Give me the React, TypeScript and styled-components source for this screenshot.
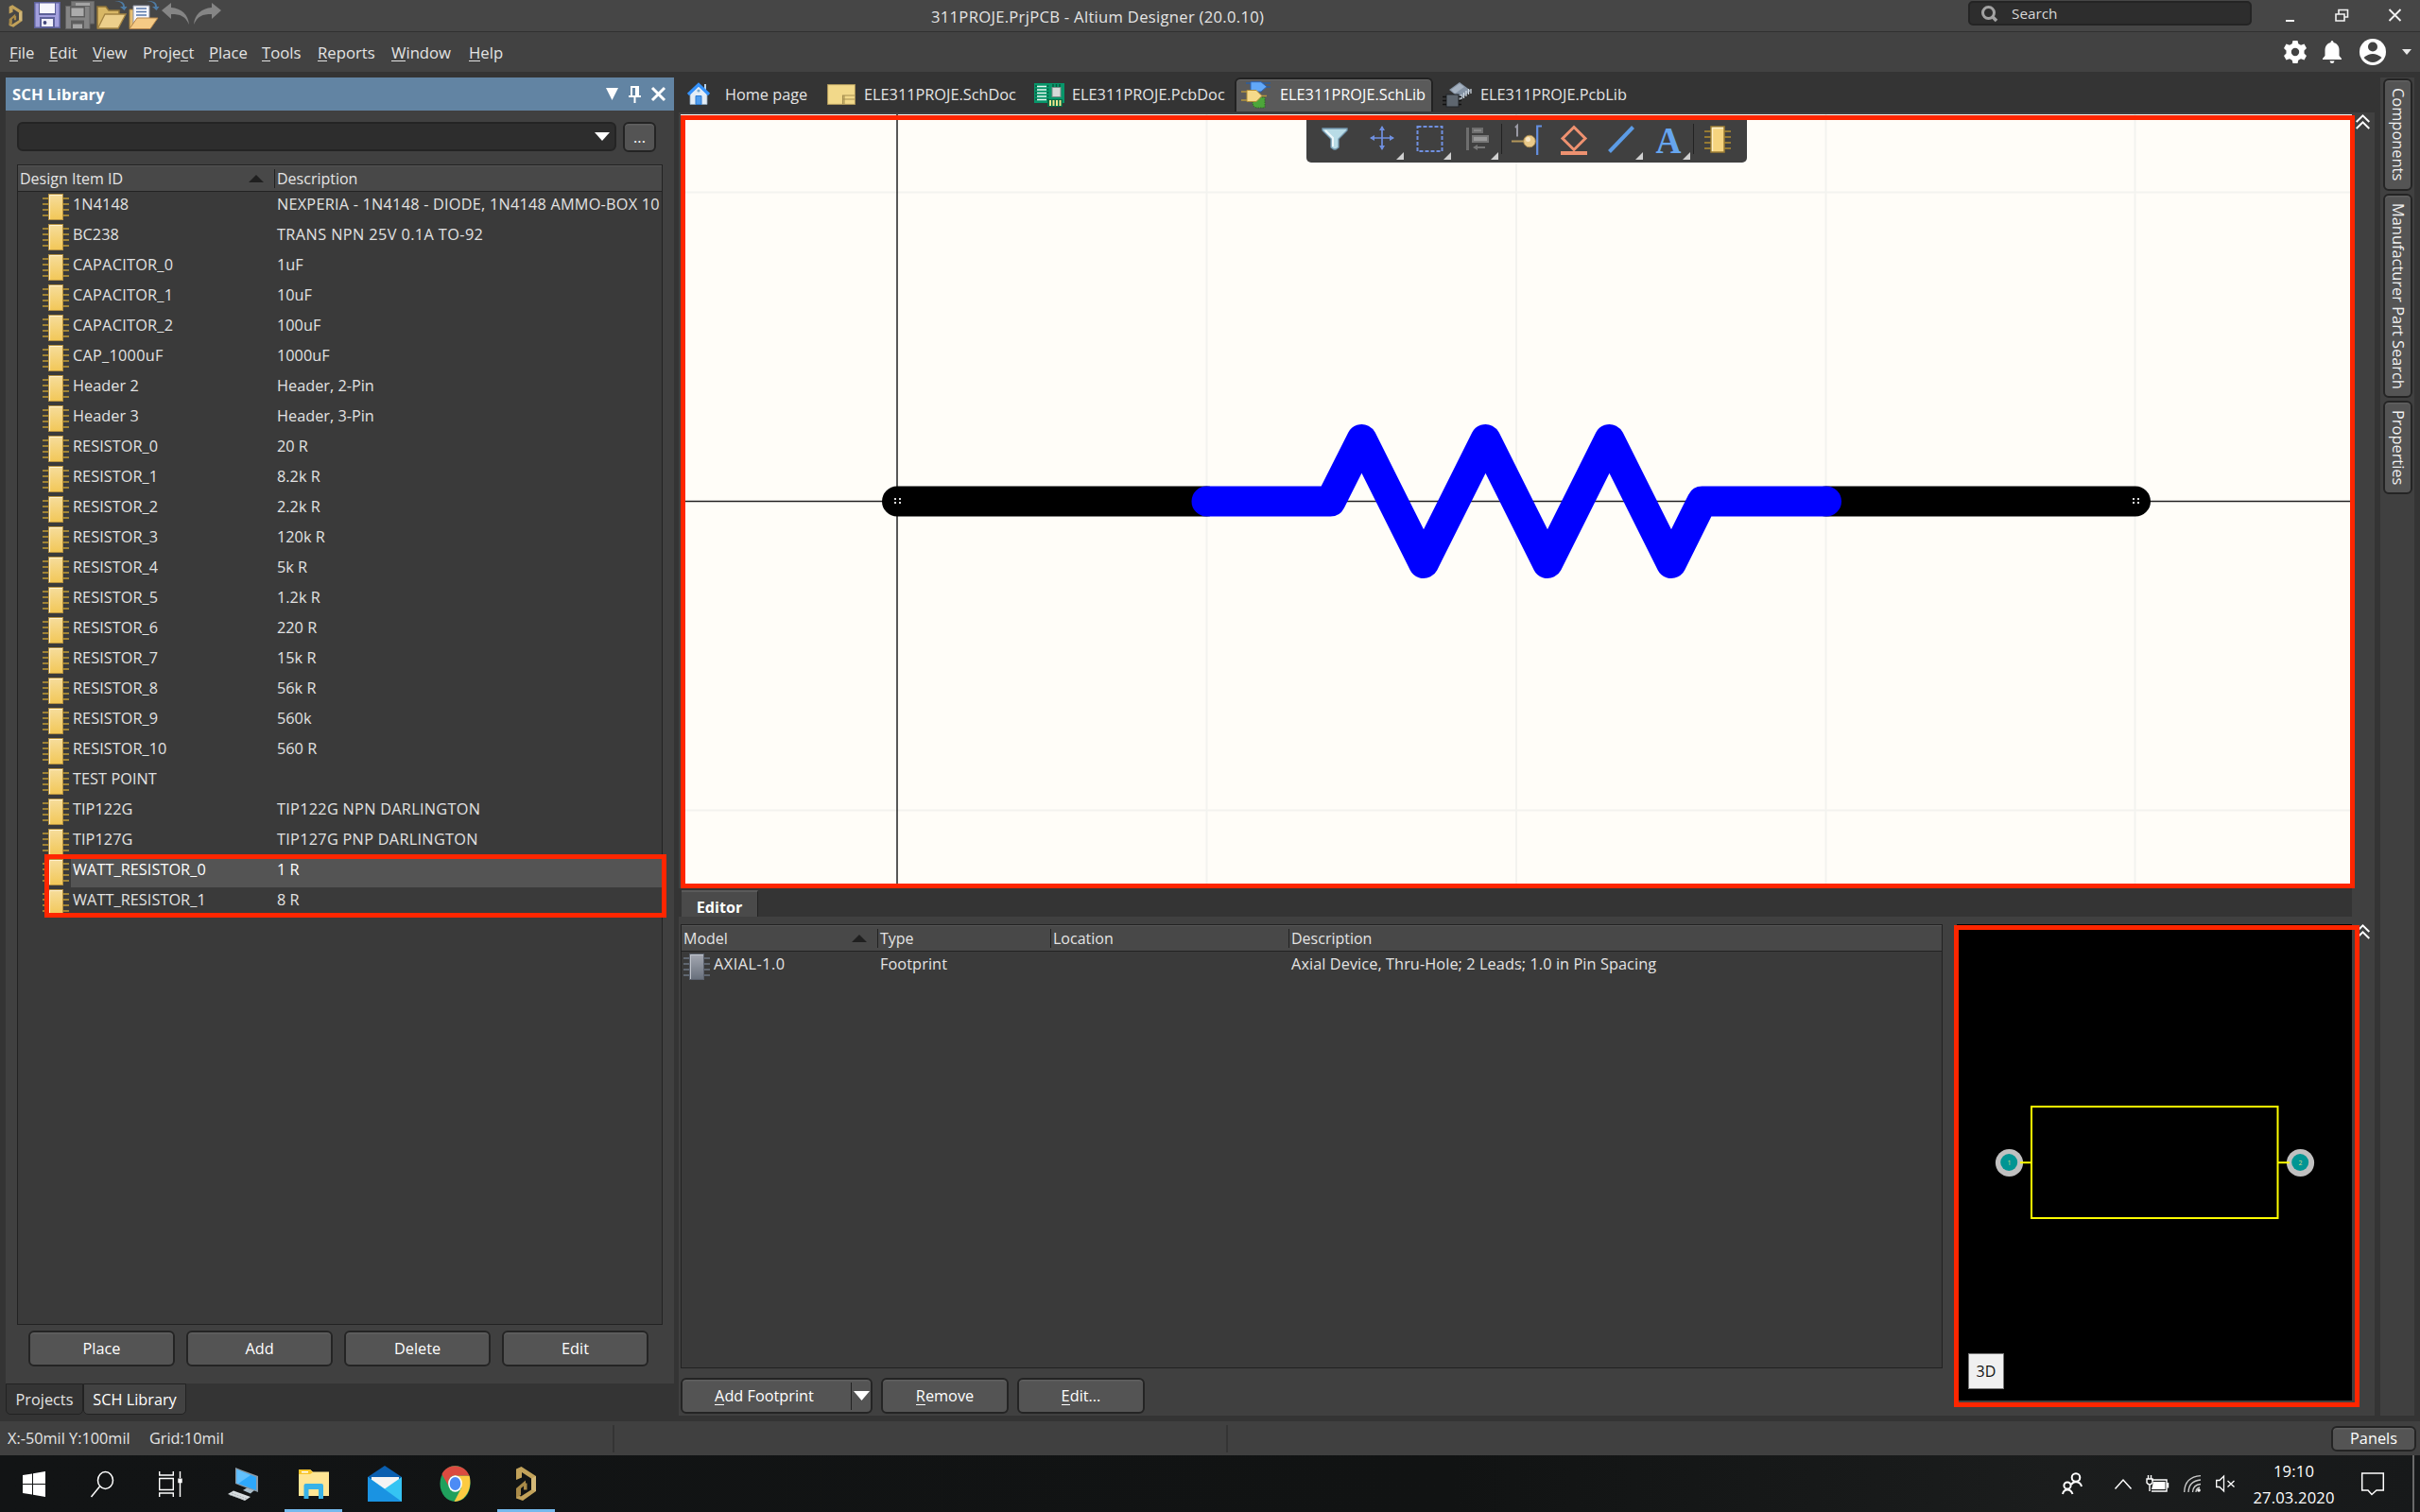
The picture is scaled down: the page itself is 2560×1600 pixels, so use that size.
import React from 'react';
import styled, { createGlobalStyle, css } from 'styled-components';

const Global = createGlobalStyle`
  html, body { margin: 0; padding: 0; background: #343434; }
  *, *::before, *::after { box-sizing: border-box; }
  body { font-family: 'Open Sans', 'Noto Sans', 'Liberation Sans', sans-serif; font-size: 16.3px; line-height: 22px; font-kerning: none; color: #e4e4e4; }
  u { text-decoration: none; border-bottom: 1px solid currentColor; display: inline-block; line-height: 17px; }
  svg { display: block; flex: none; overflow: visible; }
`;

const Screen = styled.div`
  width: 2560px;
  height: 1600px;
  overflow: hidden;
  display: flex;
  flex-direction: column;
  white-space: nowrap;
`;

/* ---------- title and menu ---------- */

const TitleBar = styled.header`
  height: 34px;
  flex: none;
  display: grid;
  grid-template-columns: 985px 1097px 300px 1fr;
  background: #464646;
  border-bottom: 1px solid #303030;
`;
const QuickAccess = styled.div`
  display: flex;
  align-items: flex-start;
  padding-left: 9px;
`;
const QuickIcon = styled.span<{ $ml: number; $mt: number }>`
  margin: ${(p) => p.$mt}px 0 0 ${(p) => p.$ml}px;
`;
const AppTitle = styled.div`
  font-size: 16.6px;
  letter-spacing: 0.3px;
  line-height: 35px;
`;
const SearchBox = styled.div`
  margin-top: 1px;
  height: 26px;
  display: flex;
  align-items: center;
  gap: 15px;
  padding-left: 12px;
  background: #2d2d2d;
  border: 2px solid #242424;
  border-radius: 5px;
  font-size: 15.3px;
  color: #d8d8d8;
`;
const WindowControls = styled.div`
  display: flex;
  padding: 9px 0 0 36px;
`;
const MenuBar = styled.nav`
  height: 42px;
  flex: none;
  display: flex;
  background: #424242;
  padding-left: 10px;
`;
const MenuItem = styled.span<{ $w: number }>`
  width: ${(p) => p.$w}px;
  font-size: 16.7px;
  line-height: 44px;
`;
const Account = styled.div`
  margin-left: auto;
  display: flex;
  align-items: center;
  padding-right: 9px;
`;
const AccountIcon = styled.span<{ $ml: number }>`
  margin-left: ${(p) => p.$ml}px;
`;

/* ---------- workspace ---------- */

const Workspace = styled.main`
  height: 1428px;
  flex: none;
  display: grid;
  grid-template-columns: 707px 1794px 36px;
  column-gap: 5px;
  padding-left: 6px;
  background: #343434;
`;
const LeftDock = styled.aside`
  padding-top: 6px;
  display: flex;
  flex-direction: column;
`;
const PanelHeader = styled.div`
  height: 35px;
  flex: none;
  display: flex;
  align-items: center;
  background: #6284a3;
  color: #fff;
  font-weight: 700;
  font-size: 16.6px;
  letter-spacing: 0.15px;
  padding: 0 9px 0 7px;
`;
const PanelTools = styled.div`
  margin-left: auto;
  display: flex;
  align-items: center;
  gap: 11px;
`;
const PanelBody = styled.div`
  height: 1347px;
  flex: none;
  display: flex;
  flex-direction: column;
  background: #404040;
  padding: 12px 12px 0 12px;
`;
const FilterRow = styled.div`
  display: flex;
  gap: 7px;
  height: 32px;
`;
const Combo = styled.div`
  width: 634px;
  height: 31px;
  background: #2d2d2d;
  border: 2px solid #242424;
  border-radius: 6px;
  display: flex;
  justify-content: flex-end;
  align-items: center;
  padding-right: 5px;
`;
const raised = css`
  background: #545454;
  border: 2px solid #242424;
  border-radius: 6px;
  box-shadow: inset 0 1px 0 #616161, inset 0 2px 0 #5a5a5a;
  color: #fff;
`;
const Button = styled.button<{ $w: number; $h?: number }>`
  ${raised}
  width: ${(p) => p.$w}px;
  height: ${(p) => p.$h ?? 38}px;
  padding: 0;
  font: inherit;
  font-kerning: none;
  display: flex;
  align-items: center;
  justify-content: center;
`;
const Table = styled.div<{ $w: number; $h: number; $top: number }>`
  width: ${(p) => p.$w}px;
  height: ${(p) => p.$h}px;
  margin-top: ${(p) => p.$top}px;
  flex: none;
  border: 1px solid #222;
  background: #3a3a3a;
  position: relative;
`;
const HeadRow = styled.div<{ $cols: string }>`
  display: grid;
  grid-template-columns: ${(p) => p.$cols};
  height: 28px;
  background: #484848;
  border-top: 1px solid #555;
  border-bottom: 1px solid #222;
  align-items: center;
  font-size: 16px;
`;
const HeadCell = styled.div`
  height: 20px;
  line-height: 20px;
  padding: 0 11px 0 2px;
  display: flex;
  justify-content: space-between;
  align-items: center;
  & + & { border-left: 1px solid #222; }
`;
const LibRow = styled.div`
  height: 32px;
  display: flex;
  padding: 2px 0 0 26px;
`;
const LibCells = styled.div<{ $on?: boolean }>`
  margin-left: 2px;
  flex: 1;
  min-width: 0;
  height: 30px;
  display: grid;
  grid-template-columns: 216px minmax(0, 1fr);
  padding-left: 2px;
  line-height: 22px;
  font-size: 16.3px;
  color: ${(p) => (p.$on ? '#fff' : '#e2e2e2')};
  background: ${(p) => (p.$on ? '#545454' : 'transparent')};
`;
const LibText = styled.span<{ $track: number }>`
  letter-spacing: ${(p) => p.$track}px;
`;
const Mark = styled.div<{ $x: number; $y: number; $w: number; $h: number }>`
  position: absolute;
  z-index: 3;
  left: ${(p) => p.$x}px;
  top: ${(p) => p.$y}px;
  width: ${(p) => p.$w}px;
  height: ${(p) => p.$h}px;
  border: 5px solid #ff2600;
`;
const ActionRow = styled.div`
  display: flex;
  gap: 12px;
  padding: 6px 0 0 12px;
`;
const DockTabs = styled.div`
  display: flex;
  height: 33px;
`;
const DockTab = styled.div<{ $w: number; $on?: boolean }>`
  width: ${(p) => p.$w}px;
  text-align: center;
  line-height: 32px;
  color: ${(p) => (p.$on ? '#fff' : '#e2e2e2')};
  background: ${(p) => (p.$on ? '#424242' : '#343434')};
  border: 1.5px solid #222;
  border-radius: 0 0 5px 5px;
`;

/* ---------- documents ---------- */

const Center = styled.section`
  display: flex;
  flex-direction: column;
`;
const DocTabs = styled.div`
  height: 43px;
  flex: none;
  display: flex;
  padding-top: 6px;
`;
const DocTab = styled.div<{ $w: number; $pad: number; $gap: number; $on?: boolean }>`
  width: ${(p) => p.$w}px;
  height: 36px;
  padding-left: ${(p) => p.$pad}px;
  display: flex;
  align-items: center;
  gap: ${(p) => p.$gap}px;
  font-size: 16.3px;
  ${(p) =>
    p.$on &&
    css`
      background: #5a5a5a;
      color: #fff;
      border: 2px solid #222;
      border-bottom: 0;
      border-radius: 6px 6px 0 0;
      box-shadow: inset 0 1px 0 #6a6a6a;
      padding-bottom: 2px;
    `}
`;
const CenterBody = styled.div`
  height: 1379px;
  background: #404040;
  display: grid;
  grid-template-columns: 1770px 24px;
  grid-template-rows: 821px 30px 1fr;
`;
const Canvas = styled.div`
  position: relative;
  margin: 2px 0 0 2px;
  background: #fffdf8;
`;
const ActiveBar = styled.div`
  position: absolute;
  z-index: 2;
  left: 662px;
  top: 6px;
  width: 466px;
  height: 45px;
  display: flex;
  background: #404040;
  border-radius: 0 0 5px 5px;
  padding-left: 5px;
`;
const Tool = styled.div<{ $more?: boolean }>`
  width: 50px;
  height: 44px;
  display: flex;
  justify-content: center;
  padding-top: 3px;
  position: relative;
  ${(p) =>
    p.$more &&
    css`
      &::after {
        content: '';
        position: absolute;
        right: 2px;
        top: 34px;
        border-left: 8px solid transparent;
        border-bottom: 8px solid #d0d0d0;
      }
    `}
`;
const ToolSep = styled.i`
  width: 1px;
  height: 32px;
  margin: 4px 1px 0 1px;
  background: #222;
`;
const ChevronCell = styled.div`
  padding: 2px 0 0 4px;
`;
const EditorBar = styled.div`
  background: #343434;
  padding: 2px 0 0 3px;
`;
const EditorTab = styled.div`
  width: 81px;
  height: 28px;
  background: #4a4a4a;
  border-top: 2px solid #5a5a5a;
  border-right: 1px solid #222;
  text-align: center;
  font-weight: 700;
  font-size: 16.2px;
  line-height: 33px;
  color: #fff;
`;
const EditorBody = styled.div`
  grid-column: 1 / 3;
  display: grid;
  grid-template-columns: 1337px 1fr;
  padding: 8px 0 0 2px;
`;
const ModelRow = styled.div`
  display: grid;
  grid-template-columns: 208px 183px 252px 1fr;
  height: 32px;
  font-size: 16.3px;
  letter-spacing: 0.08px;
  line-height: 27px;
  padding-left: 2px;
`;
const ModelName = styled.span`
  display: flex;
  gap: 4px;
  letter-spacing: 0.5px;
`;
const IconDrop = styled.span`
  padding-top: 2px;
`;
const EditorButtons = styled.div`
  display: flex;
  gap: 9px;
  margin-top: 10px;
`;
const SplitButton = styled.button`
  ${raised}
  width: 203px;
  height: 38px;
  padding: 0;
  font: inherit;
  font-kerning: none;
  display: grid;
  grid-template-columns: 178px 1fr;
  align-items: center;
`;
const SplitLabel = styled.span`
  padding-right: 5px;
`;
const SplitMore = styled.span`
  height: 29px;
  border-left: 1px solid #222;
  display: flex;
  align-items: center;
  justify-content: center;
`;
const PreviewArea = styled.div`
  position: relative;
  display: flex;
  padding-left: 13px;
  gap: 4px;
`;
const Preview = styled.div`
  width: 418px;
  height: 504px;
  background: #000;
  display: flex;
  flex-direction: column;
  position: relative;
`;
const ThreeD = styled.button`
  position: absolute;
  left: 12px;
  bottom: 12px;
  width: 38px;
  height: 38px;
  padding: 0 0 1px;
  background: #f0f0f0;
  border: 1px solid #777;
  color: #111;
  font: inherit;
  font-size: 16px;
`;
const RightStrip = styled.aside`
  margin: 6px 0 0 1px;
  height: 1416px;
  width: 36px;
  background: #404040;
  padding: 1px 2px 0 3px;
  display: flex;
  flex-direction: column;
  gap: 3px;
`;
const SideTab = styled.div<{ $h: number }>`
  ${raised}
  width: 31px;
  height: ${(p) => p.$h}px;
  writing-mode: vertical-rl;
  display: flex;
  align-items: center;
  justify-content: center;
  color: #f0f0f0;
  font-size: 16.4px;
`;

/* ---------- status and taskbar ---------- */

const StatusBar = styled.footer`
  height: 36px;
  flex: none;
  background: #404040;
  display: grid;
  grid-template-columns: 150px 499px 649px 1fr;
  padding-left: 8px;
  line-height: 36px;
  align-items: center;
`;
const StatusCell = styled.div<{ $line?: boolean; $shift?: number }>`
  height: 29px;
  line-height: 29px;
  margin-left: ${(p) => p.$shift ?? 0}px;
  display: flex;
  ${(p) => p.$line && 'border-left: 2px solid #343434;'}
`;
const PanelsSlot = styled.div`
  margin: 1px 4px 0 auto;
`;
const TaskBar = styled.div`
  height: 60px;
  flex: none;
  display: flex;
  background: linear-gradient(90deg, #121415, #111313 60%, #1b1d1d 85%, #17191a);
`;
const TaskSlot = styled.div<{ $w: number; $on?: boolean; $ml?: number }>`
  width: ${(p) => p.$w}px;
  height: 60px;
  margin-left: ${(p) => p.$ml ?? 0}px;
  display: flex;
  align-items: center;
  justify-content: center;
  ${(p) =>
    p.$on &&
    css`
      background: linear-gradient(#76b9ed, #76b9ed) center bottom / 61px 3px no-repeat;
    `}
`;
const Tray = styled.div`
  margin-left: auto;
  display: flex;
`;
const Clock = styled.div`
  width: 111px;
  padding-top: 3px;
  text-align: center;
  font-size: 16.6px;
  letter-spacing: 0.15px;
  line-height: 27.5px;
  color: #fff;
`;
const ShowDesktop = styled.div`
  width: 8px;
  margin-left: 14px;
  border-left: 2px solid #6a6a6a;
`;

/* ---------- icons ---------- */

const Caret = ({ w = 16, h = 9, c = '#fff' }: { w?: number; h?: number; c?: string }) => (
  <svg width={w} height={h} viewBox="0 0 16 9" preserveAspectRatio="none"><path d="M0 0H16L8 9Z" fill={c} /></svg>
);
const SortUp = () => (
  <svg width="16" height="8" viewBox="0 0 16 8"><path d="M0 8H16L8 0Z" fill="#202020" /></svg>
);
const Chevrons = () => (
  <svg width="15" height="16" viewBox="0 0 15 16" fill="none" stroke="#fff" strokeWidth="2">
    <path d="M.7 8 7.5 1.4 14.3 8M.7 15 7.5 8.4 14.3 15" />
  </svg>
);
const AltiumMark = ({ w, h }: { w: number; h: number }) => (
  <svg width={w} height={h} viewBox="0 0 23 36">
    <path d="M1 2.500 6.500 0 22 10V26L8 36 1 33.500V29L6 31.500 17 24.500V12.500L7 6V11.500L1 14Z" fill="#c2a25a" />
    <path d="M1 23 11 14.500V17.500H12.500V24.500H9V20.500L6 23V30L1 33Z" fill="#a98a48" />
    <path d="M17 12.500 22 10V26L17 24.500Z" fill="#d3b878" />
  </svg>
);
const Floppy = () => (
  <svg width="28" height="28" viewBox="0 0 28 28">
    <path d="M0 0H28V28H0Z" fill="#5d6199" /><path d="M1.500 1.500H26.500V26.500H1.500Z" fill="#a3a0de" />
    <path d="M5 0H23V14H5Z" fill="#5d6199" /><path d="M6 1.500H22V12H6Z" fill="#f6f6fc" />
    <path d="M6 16H22V28H6Z" fill="#5d6199" /><path d="M8 18H20V26H8Z" fill="#f2f2fa" />
    <circle cx="11.500" cy="22" r="1.900" fill="#44487c" />
  </svg>
);
const FloppyStack = () => (
  <svg width="31" height="30" viewBox="0 0 31 30">
    <path d="M6.500 .5H30.500V24H6.500Z" fill="#777" stroke="#666" /><path d="M11 2H26V6H11Z" fill="#a4a4a4" />
    <path d="M.5 5.500H26V29.500H.5Z" fill="#858585" stroke="#626262" />
    <path d="M5 6H21V17.500H5Z" fill="#5e5e5e" /><path d="M6.500 7.500H19.500V16H6.500Z" fill="#acacac" />
    <path d="M6 20.500H20V30H6Z" fill="#5e5e5e" /><path d="M8 24.500H18V29H8Z" fill="#a6a6a6" />
  </svg>
);
const Arrow = () => <path d="M18 1C24 0 28 2 28 6H25L29.500 10 32.500 6H30C30 1 25-1 18 1Z" fill="#4e7ca5" />;
const FolderOpen = () => (
  <svg width="33" height="30" viewBox="0 0 33 30">
    <path d="M1 29V6H10L13 10H24V14" fill="#d8b765" stroke="#8f7338" strokeWidth="1.500" />
    <path d="M1.500 29 9 14H31L23 29Z" fill="#eccf8b" stroke="#a38443" strokeWidth="1.300" />
    <Arrow />
  </svg>
);
const FolderDoc = () => (
  <svg width="33" height="30" viewBox="0 0 33 30">
    <path d="M1 29V9H6V29Z" fill="#e6bd70" stroke="#9d7d3c" />
    <path d="M5 5H22V24H5Z" fill="#f8f8fc" stroke="#8d93a5" />
    <path d="M8 8H19M8 11.500H19M8 15H19" stroke="#5575a8" strokeWidth="1.300" />
    <path d="M1 29.500 9 18H31L23 29.500Z" fill="#f5ca85" stroke="#b3834a" />
    <Arrow />
  </svg>
);
const Undo = ({ flip }: { flip?: boolean }) => (
  <svg width="30" height="24" viewBox="0 0 30 24">
    <path transform={flip ? 'matrix(-1 0 0 1 30 0)' : undefined} d="M0 8 10 0V5C21 6 28 12 29 23 25 14 20 12 10 12V17Z" fill="#858585" />
  </svg>
);

const Chip = ({ grey }: { grey?: boolean }) => (
  <svg width="28" height="28" viewBox="0 0 28 28">
    <defs>
      <linearGradient id={grey ? 'cg' : 'cy'} x1="0" y1="0" x2="0" y2="1">
        <stop offset="0" stopColor={grey ? '#a4a8b2' : '#f6dd9c'} />
        <stop offset="1" stopColor={grey ? '#68707c' : '#f2c757'} />
      </linearGradient>
    </defs>
    <path d="M0 5H6M0 11H6M0 17H6M0 23H6M22 5H28M22 11H28M22 17H28M22 23H28" stroke={grey ? '#5f6670' : '#a08334'} strokeWidth="2" />
    <rect x="6.500" y=".5" width="15" height="27" fill={`url(#${grey ? 'cg' : 'cy'})`} stroke={grey ? '#5c626e' : '#b59140'} />
    <path d="M7.500 27V1.500H21" stroke={grey ? '#c0c4cc' : '#fff2cf'} fill="none" />
  </svg>
);
const Pin = () => (
  <svg width="13" height="18" viewBox="0 0 13 18">
    <path d="M2 0H11V10H13V12H7.500V18H5.500V12H0V10H2ZM4 2V10H7V2Z" fill="#fff" fillRule="evenodd" />
  </svg>
);
const Cross = () => (
  <svg width="15" height="15" viewBox="0 0 15 15"><path d="M1 1 14 14M14 1 1 14" stroke="#fff" strokeWidth="3" /></svg>
);

const HomeIcon = () => (
  <svg width="24" height="24" viewBox="0 0 24 24">
    <path d="M18 1H20V8H18Z" fill="#b9d3ea" />
    <path d="M3 10 12 2 21 10V22.500H3Z" fill="#e4edf6" stroke="#8fa6bb" strokeWidth=".8" />
    <path d="M9 13.500H15V22.500H9Z" fill="#4f9dee" stroke="#2e7bd0" /><circle cx="12" cy="8" r="1.600" fill="#7aa9cc" />
    <path d="M1 12 12 1.500 23 12" fill="none" stroke="#3592fb" strokeWidth="3.200" />
  </svg>
);
const SchDocIcon = () => (
  <svg width="30" height="22" viewBox="0 0 30 22">
    <rect x=".6" y=".6" width="28.800" height="20.800" fill="#f2d98a" stroke="#b09a5c" />
    <path d="M16.500 21V12H29M16.500 16H29M18 21V12" fill="none" stroke="#a58f50" strokeWidth="1.100" />
  </svg>
);
const PcbDocIcon = () => (
  <svg width="32" height="25" viewBox="0 0 32 25">
    <path d="M0 0H32V21H0Z" fill="#07966a" /><path d="M14 17H30V25H14Z" fill="#066b45" />
    <path d="M3 3.500H13M3 7H13M3 10.500H13M3 14H13M3 17.500H13" stroke="#e7f6ef" strokeWidth="1.700" />
    <path d="M2 2V19M14.500 2V18" stroke="#045f40" strokeWidth="1.500" strokeDasharray="2 1.500" />
    <rect x="19" y="4.500" width="9" height="10" fill="#d5d9d8" stroke="#7c8a86" />
    <path d="M20 1V4M23.500 1V4M27 1V4" stroke="#04583c" strokeWidth="1.500" />
    <path d="M17 18V24M20.500 18V24M24 18V24M27.500 18V24" stroke="#f1e68d" strokeWidth="2" />
  </svg>
);
const SchLibIcon = () => (
  <svg width="31" height="29" viewBox="0 0 31 29">
    <path d="M12 17H25V28H17C13 28 12 25 12 22Z" fill="#4da63a" stroke="#2c6d22" strokeDasharray="1.500 1" />
    <path d="M5 2H31M26 6H31" stroke="#2b5d9e" strokeWidth="1.500" />
    <path d="M10 .7H21L27 5.700 21 11H10Z" fill="#62a8f8" stroke="#2e64b5" />
    <path d="M0 11H6M0 20H6M22 15.500H27" stroke="#b5953d" strokeWidth="1.500" />
    <path d="M6 9.500H16L22 15.500 16 21.500H6Z" fill="#f5da8a" stroke="#b08e3b" />
  </svg>
);
const PcbLibIcon = () => (
  <svg width="32" height="27" viewBox="0 0 32 27">
    <path d="M7 8 18 0 30 9 19 18Z" fill="#8593a4" /><path d="M9 8 18 1.500 23 5 13 12Z" fill="#a6b2c0" />
    <path d="M20 18V13M22.500 17V11M25 15V9M27.500 13V7M30 12V7M18 16V20" stroke="#d3dbe3" strokeWidth="1.200" />
    <rect x="4" y="13" width="13" height="13" fill="#5e666f" stroke="#23272b" />
    <path d="M0 15.500H4M0 19.500H4M0 23.500H4M17 15.500H20M17 19.500H20M17 23.500H20" stroke="#111" strokeWidth="1.700" />
  </svg>
);

const toolIcons: { more?: boolean; sep?: boolean; art: React.ReactNode }[] = [
  { art: <><path d="M1 6H27V8L18 17V26L15 28H13L10 26V17L1 8Z" fill="#b8dbe6" stroke="#7397ae" strokeWidth="1.300" /><path d="M4 8 12 16V25" stroke="#eef8fb" strokeWidth="2" fill="none" /></> },
  { more: true, art: <><path d="M14 4V28M2 16H26" stroke="#7090e0" strokeWidth="1.700" /><path d="M14 3 17 8H11ZM14 29 17 24H11ZM1 16 6 13V19ZM27 16 22 13V19Z" fill="#7090e0" /></> },
  { more: true, art: <path d="M1.500 4H27.500V30H1.500Z" fill="none" stroke="#7090e0" strokeWidth="2" strokeDasharray="4 2" /> },
  { more: true, art: <><path d="M3 5H6V29H3Z" fill="#6e6e6e" /><path d="M9 5H21V11H9Z" fill="#6e6e6e" /><path d="M11 7H19V9H11Z" fill="#888" /><path d="M9 13H27V21H9Z" fill="#777" /><path d="M11 15H25V19H11Z" fill="#999" /><path d="M10 26 15 23V25H23V27H15V29Z" fill="#777" /></> },
  { sep: true, art: <><path d="M2 5 4 3V14.500" fill="none" stroke="#9a9aa5" strokeWidth="2" /><path d="M-2 19.500H12" stroke="#b3965a" strokeWidth="2" /><circle cx="17" cy="19.500" r="6.300" fill="#e9c989" stroke="#a98a50" /><circle cx="15.500" cy="17.500" r="2.500" fill="#f9e9c8" /><path d="M30 3.500H25.200V34" fill="none" stroke="#6490e2" strokeWidth="2.200" /></> },
  { art: <><path d="M14 4.500 26 16.500 14 28.500 2 16.500Z" fill="none" stroke="#ee9170" strokeWidth="3" /><path d="M0 30H28V34H0Z" fill="#ee9170" /></> },
  { more: true, art: <path d="M1.500 30.500 26.500 4.500" stroke="#5c9ce6" strokeWidth="4" /> },
  { more: true, art: <text x="14" y="31.500" textAnchor="middle" fontFamily="Liberation Serif, serif" fontSize="41" fontWeight="700" textLength="27" lengthAdjust="spacingAndGlyphs" fill="#66a5ee">A</text> },
  { sep: true, art: <><path d="M-1 9H27M-1 15H27M-1 21H27M-1 27H27" stroke="#967a33" strokeWidth="2" /><rect x="6" y="4" width="14" height="27" fill="#f6d47e" stroke="#9c7d35" strokeWidth="1.500" /><path d="M7.500 30V5.500H19" stroke="#fff0c8" strokeWidth="1.400" fill="none" /></> },
];

const WindowsLogo = () => (
  <svg width="24" height="27" viewBox="0 0 24 27" fill="#fff"><path d="M0 4 10 2.500V13H0ZM11 2.300 24 0V13H11ZM0 14H10V24.500L0 23ZM11 14H24V27L11 24.700Z" /></svg>
);
const ThinSearch = () => (
  <svg width="24" height="27" viewBox="0 0 24 27" fill="none" stroke="#fff" strokeWidth="1.500"><ellipse cx="15.500" cy="9.500" rx="8" ry="9" /><path d="M9.500 16 .5 27" /></svg>
);
const TaskView = () => (
  <svg width="24" height="27" viewBox="0 0 24 27" fill="none" stroke="#fff" strokeWidth="1.400">
    <path d="M.7 0V4H15.300V0M.7 27V23H15.300V27M.7 7.500H15.300V19.500H.7ZM22.500 0V7M22.500 12V27" /><path d="M21 8.300H24V11.500H21Z" fill="#fff" />
  </svg>
);
const PcIcon = () => (
  <svg width="32" height="35" viewBox="0 0 32 35">
    <path d="M8 0 32 9V26L8 17Z" fill="#8c9aa5" /><path d="M9.500 2 30 10V24L9.500 16.500Z" fill="#2ea8fb" /><path d="M9.500 2 24 8 11 17 9.500 16.500Z" fill="#62c0fd" />
    <path d="M16 24 20 21.500 28 24 24 27.500Z" fill="#a9bcc8" /><path d="M0 28 6 24.500 24 31 18 35Z" fill="#d8dde0" /><path d="M4 27 20 33M2 29 17 34" stroke="#9ba3a8" strokeWidth=".7" strokeDasharray="2 1" />
  </svg>
);
const ExplorerIcon = () => (
  <svg width="32" height="31" viewBox="0 0 32 31">
    <path d="M0 0H12L15 2.500H32V28H0Z" fill="#ffe594" /><path d="M0 0H12L15 3 12 5H0Z" fill="#f8c52c" /><path d="M3 2H10V3.500H3Z" fill="#fff" />
    <path d="M5.500 31V17Q5.500 15 7.500 15H24Q26 15 26 17V31H21V21H10.500V31Z" fill="#38b2e8" />
  </svg>
);
const MailIcon = () => (
  <svg width="36" height="38" viewBox="0 0 36 38">
    <path d="M0 12 18 0 36 12V20H0Z" fill="#0a5fb0" /><path d="M4 12H33V26H4Z" fill="#f4f4f4" />
    <path d="M0 12 18 24.500 36 12V38H0Z" fill="#35c4f3" /><path d="M0 12 36 38H0Z" fill="#1a93e2" />
  </svg>
);
const ChromeIcon = () => (
  <svg width="33" height="38" viewBox="0 0 34 38" preserveAspectRatio="none">
    <ellipse cx="17" cy="19" rx="16.500" ry="19" fill="#1fa05c" />
    <path d="M17 19V10.500H32.500C36 23 29 38 16 38L24 23Z" fill="#fccb42" />
    <path d="M2.500 9C8-3 27-3 32.500 10.500H17C11 10.500 9.500 15 9.500 21Z" fill="#db4b40" />
    <ellipse cx="17" cy="19" rx="7.600" ry="8.700" fill="#fff" /><ellipse cx="17" cy="19" rx="6" ry="7" fill="#4c8bf5" />
  </svg>
);

/* ---------- data ---------- */

/* id, description, tracking of the description */
const items: [string, string, number?][] = [
  ['1N4148', 'NEXPERIA - 1N4148 - DIODE, 1N4148 AMMO-BOX 10', 0.22],
  ['BC238', 'TRANS NPN 25V 0.1A TO-92', 0.4],
  ['CAPACITOR_0', '1uF'],
  ['CAPACITOR_1', '10uF'],
  ['CAPACITOR_2', '100uF'],
  ['CAP_1000uF', '1000uF'],
  ['Header 2', 'Header, 2-Pin'],
  ['Header 3', 'Header, 3-Pin'],
  ['RESISTOR_0', '20 R'],
  ['RESISTOR_1', '8.2k R'],
  ['RESISTOR_2', '2.2k R'],
  ['RESISTOR_3', '120k R'],
  ['RESISTOR_4', '5k R'],
  ['RESISTOR_5', '1.2k R'],
  ['RESISTOR_6', '220 R'],
  ['RESISTOR_7', '15k R'],
  ['RESISTOR_8', '56k R'],
  ['RESISTOR_9', '560k'],
  ['RESISTOR_10', '560 R'],
  ['TEST POINT', ''],
  ['TIP122G', 'TIP122G NPN DARLINGTON', 0.28],
  ['TIP127G', 'TIP127G PNP DARLINGTON', 0.28],
  ['WATT_RESISTOR_0', '1 R'],
  ['WATT_RESISTOR_1', '8 R'],
];

const menus: { w: number; pre: string; key: string; post: string }[] = [
  { w: 42, pre: '', key: 'F', post: 'ile' },
  { w: 46, pre: '', key: 'E', post: 'dit' },
  { w: 53, pre: '', key: 'V', post: 'iew' },
  { w: 70, pre: 'Proje', key: 'c', post: 't' },
  { w: 56, pre: '', key: 'P', post: 'lace' },
  { w: 59, pre: '', key: 'T', post: 'ools' },
  { w: 78, pre: '', key: 'R', post: 'eports' },
  { w: 82, pre: '', key: 'W', post: 'indow' },
  { w: 50, pre: '', key: 'H', post: 'elp' },
];

const Schematic = () => (
  <svg width="1768" height="819" viewBox="0 0 1768 819" fill="none">
    <path d="M556.500 0V819M884 0V819M1211.500 0V819M1538.500 0V819M0 82.500H1768M0 736.500H1768" stroke="#f3f3ef" strokeWidth="2" />
    <path d="M229 0V819M0 409.500H1768" stroke="#222" strokeWidth="1.500" />
    <g strokeWidth="32" strokeLinecap="round" strokeLinejoin="round">
      <path d="M229 409.500H556.500M1212 409.500H1539" stroke="#000" />
      <path d="M556.500 409.500H687.500L720.500 344 786 475 851.500 344 917 475 982.500 344 1048 475 1080.500 409.500H1212" stroke="#00f" />
    </g>
    <path d="M226 407H228M231 407H233M226 411H228M231 411H233M1536 407H1538M1541 407H1543M1536 411H1538M1541 411H1543" stroke="#ddd" strokeWidth="2" />
  </svg>
);

const Footprint = () => (
  <svg width="418" height="504" viewBox="0 0 418 504">
    <rect x="79" y="193" width="260.500" height="118" fill="none" stroke="#ff0" strokeWidth="2" />
    {[55.5, 363.5].map((x, i) => (
      <g key={x}>
        <circle cx={x} cy="252.500" r="14.600" fill="#c0c0c0" />
        <circle cx={x - 0.3} cy="252" r="9" fill="#009593" />
        <text x={x} y="255" fontSize="7" textAnchor="middle" fill="#d5d98a">{i + 1}</text>
      </g>
    ))}
    <path d="M67 252.200H79M340 252.200H352" stroke="#ff0" strokeWidth="2" />
  </svg>
);

export default function App() {
  return (
    <>
      <Global />
      <Screen>
        <TitleBar>
          <QuickAccess>
            <QuickIcon $ml={0} $mt={5}><AltiumMark w={15} h={24} /></QuickIcon>
            <QuickIcon $ml={12} $mt={2}><Floppy /></QuickIcon>
            <QuickIcon $ml={5} $mt={1}><FloppyStack /></QuickIcon>
            <QuickIcon $ml={2} $mt={1}><FolderOpen /></QuickIcon>
            <QuickIcon $ml={1} $mt={1}><FolderDoc /></QuickIcon>
            <QuickIcon $ml={2} $mt={3}><Undo /></QuickIcon>
            <QuickIcon $ml={3} $mt={3}><Undo flip /></QuickIcon>
          </QuickAccess>
          <AppTitle>311PROJE.PrjPCB - Altium Designer (20.0.10)</AppTitle>
          <SearchBox>
            <svg width="17" height="17" viewBox="0 0 17 17" fill="none" stroke="#a2a2a2" strokeWidth="3"><circle cx="7.500" cy="7.500" r="6" /><path d="M11.500 11.500 16 16" strokeWidth="3.500" /></svg>
            Search
          </SearchBox>
          <WindowControls>
            <svg width="122" height="14" viewBox="0 0 122 14" fill="none" stroke="#f2f2f2" strokeWidth="1.600">
              <path d="M0 13H9" strokeWidth="2" /><path d="M53 6H62V13H53ZM56 6V1.500H65.500V9H62" /><path d="M109.500 1 121.500 13M121.500 1 109.500 13" strokeWidth="1.900" />
            </svg>
          </WindowControls>
        </TitleBar>
        <MenuBar>
          {menus.map((m) => (
            <MenuItem key={m.pre + m.key + m.post} $w={m.w}>{m.pre}<u>{m.key}</u>{m.post}</MenuItem>
          ))}
          <Account>
            <svg width="24" height="24" viewBox="0 0 24 24" fill="#fff">
              <path fillRule="evenodd" d="M9.500 0H14.500L15.300 3.300 18 4.800 21.500 3.600 24 8 21.500 10.500V13.500L24 16 21.500 20.400 18 19.200 15.300 20.700 14.500 24H9.500L8.700 20.700 6 19.200 2.500 20.400 0 16 2.500 13.500V10.500L0 8 2.500 3.600 6 4.800 8.700 3.300ZM12 7.800A4.200 4.200 0 1 0 12 16.200 4.200 4.200 0 1 0 12 7.800Z" />
            </svg>
            <AccountIcon $ml={17}>
              <svg width="20" height="24" viewBox="0 0 20 24" fill="#fff">
                <path d="M10 0C11 0 11.500 1 11.500 2 15.500 3 17.500 6 17.500 10V16L20 19V20H0V19L2.500 16V10C2.500 6 4.500 3 8.500 2 8.500 1 9 0 10 0ZM7.500 21.500H12.500Q12 24 10 24T7.500 21.500Z" />
              </svg>
            </AccountIcon>
            <AccountIcon $ml={19}>
              <svg width="28" height="28" viewBox="0 0 28 28">
                <circle cx="14" cy="14" r="14" fill="#fff" /><circle cx="14" cy="8.500" r="5" fill="#424242" /><path d="M4.500 20Q14 12 23.500 20 14 30 4.500 20Z" fill="#424242" />
              </svg>
            </AccountIcon>
            <AccountIcon $ml={17}><Caret w={10} h={6} c="#e8e8e8" /></AccountIcon>
          </Account>
        </MenuBar>

        <Workspace>
          <LeftDock>
            <PanelHeader>
              SCH Library
              <PanelTools><Caret w={13} h={13} /><Pin /><Cross /></PanelTools>
            </PanelHeader>
            <PanelBody>
              <FilterRow>
                <Combo><Caret /></Combo>
                <Button $w={35} $h={32}>...</Button>
              </FilterRow>
              <Table $w={683} $h={1228} $top={13}>
                <HeadRow $cols="271px 1fr">
                  <HeadCell>Design Item ID<SortUp /></HeadCell>
                  <HeadCell>Description</HeadCell>
                </HeadRow>
                {items.map(([id, text, track]) => (
                  <LibRow key={id}>
                    <Chip />
                    <LibCells $on={id === 'WATT_RESISTOR_0'}>
                      <LibText $track={id.startsWith('CAP') ? 0.25 : 0.05}>{id}</LibText>
                      <LibText $track={track ?? 0}>{text}</LibText>
                    </LibCells>
                  </LibRow>
                ))}
                <Mark $x={28} $y={729} $w={658} $h={67} />
              </Table>
              <ActionRow>
                <Button $w={155}>Place</Button>
                <Button $w={155}>Add</Button>
                <Button $w={155}>Delete</Button>
                <Button $w={155}>Edit</Button>
              </ActionRow>
            </PanelBody>
            <DockTabs>
              <DockTab $w={82}>Projects</DockTab>
              <DockTab $w={109} $on>SCH Library</DockTab>
            </DockTabs>
          </LeftDock>

          <Center>
            <DocTabs>
              <DocTab $w={148} $pad={9} $gap={16}><HomeIcon />Home page</DocTab>
              <DocTab $w={219} $pad={9} $gap={9}><SchDocIcon />ELE311PROJE.SchDoc</DocTab>
              <DocTab $w={221} $pad={9} $gap={8}><PcbDocIcon />ELE311PROJE.PcbDoc</DocTab>
              <DocTab $w={210} $pad={5} $gap={10} $on><SchLibIcon />ELE311PROJE.SchLib</DocTab>
              <DocTab $w={220} $pad={10} $gap={8}><PcbLibIcon />ELE311PROJE.PcbLib</DocTab>
            </DocTabs>
            <CenterBody>
              <Canvas>
                <Schematic />
                <ActiveBar>
                  {toolIcons.map((t, i) => (
                    <React.Fragment key={i}>
                      {t.sep && <ToolSep />}
                      <Tool $more={t.more}><svg width="28" height="34" viewBox="0 0 28 34">{t.art}</svg></Tool>
                    </React.Fragment>
                  ))}
                </ActiveBar>
                <Mark $x={0} $y={1} $w={1771} $h={818} />
              </Canvas>
              <ChevronCell><Chevrons /></ChevronCell>
              <EditorBar><EditorTab>Editor</EditorTab></EditorBar>
              <div />
              <EditorBody>
                <div>
                  <Table $w={1335} $h={470} $top={0}>
                    <HeadRow $cols="207px 183px 252px 1fr">
                      <HeadCell>Model<SortUp /></HeadCell>
                      <HeadCell>Type</HeadCell>
                      <HeadCell>Location</HeadCell>
                      <HeadCell>Description</HeadCell>
                    </HeadRow>
                    <ModelRow>
                      <ModelName><IconDrop><Chip grey /></IconDrop>AXIAL-1.0</ModelName>
                      <span>Footprint</span>
                      <span />
                      <span>Axial Device, Thru-Hole; 2 Leads; 1.0 in Pin Spacing</span>
                    </ModelRow>
                  </Table>
                  <EditorButtons>
                    <SplitButton><SplitLabel><u>A</u>dd Footprint</SplitLabel><SplitMore><Caret w={17} h={10} /></SplitMore></SplitButton>
                    <Button $w={135}><span><u>R</u>emove</span></Button>
                    <Button $w={135}><span><u>E</u>dit...</span></Button>
                  </EditorButtons>
                </div>
                <PreviewArea>
                  <Preview><Footprint /><ThreeD>3D</ThreeD></Preview>
                  <Chevrons />
                  <Mark $x={10} $y={1} $w={429} $h={510} />
                </PreviewArea>
              </EditorBody>
            </CenterBody>
          </Center>

          <RightStrip>
            <SideTab $h={119}>Components</SideTab>
            <SideTab $h={216}>Manufacturer Part Search</SideTab>
            <SideTab $h={99}>Properties</SideTab>
          </RightStrip>
        </Workspace>

        <StatusBar>
          <StatusCell>X:-50mil Y:100mil</StatusCell>
          <StatusCell>Grid:10mil</StatusCell>
          <StatusCell $line $shift={-9} />
          <StatusCell $line $shift={-9}><PanelsSlot><Button $w={90} $h={27}>Panels</Button></PanelsSlot></StatusCell>
        </StatusBar>

        <TaskBar>
          <TaskSlot $w={72}><WindowsLogo /></TaskSlot>
          <TaskSlot $w={72}><ThinSearch /></TaskSlot>
          <TaskSlot $w={72}><TaskView /></TaskSlot>
          <TaskSlot $w={75} $ml={3}><PcIcon /></TaskSlot>
          <TaskSlot $w={75} $on><ExplorerIcon /></TaskSlot>
          <TaskSlot $w={75}><MailIcon /></TaskSlot>
          <TaskSlot $w={75}><ChromeIcon /></TaskSlot>
          <TaskSlot $w={75} $on><AltiumMark w={23} h={36} /></TaskSlot>
          <Tray>
            <TaskSlot $w={54}>
              <svg width="22" height="24" viewBox="0 0 22 24" fill="none" stroke="#fff" strokeWidth="2"><circle cx="15" cy="5.500" r="4.300" /><path d="M10 13Q12 10 15 10 20 10.500 21 15" /><circle cx="6" cy="14" r="3.600" /><path d="M1 23Q2 18.500 6 18.500T11.500 23" /></svg>
            </TaskSlot>
            <TaskSlot $w={36} $ml={9}><svg width="18" height="11" viewBox="0 0 18 11" fill="none" stroke="#fff" strokeWidth="1.500"><path d="M.5 10.500 9 1 17.500 10.500" /></svg></TaskSlot>
            <TaskSlot $w={36}>
              <svg width="24" height="18" viewBox="0 0 24 18" fill="none" stroke="#fff" strokeWidth="1.400"><path d="M6 5H22V17H6M23.500 8V13.500M1 4H7V8Q4 12 1 8ZM2.500 0V4M5.500 0V4M4 10V17" /><path d="M8 7H20.500V15H6Z" fill="#fff" stroke="none" /></svg>
            </TaskSlot>
            <TaskSlot $w={37}>
              <svg width="18" height="18" viewBox="0 0 18 18" fill="none" stroke="#ccc" strokeWidth="1.300"><path d="M.7 18Q1 2 18 .7M5 18Q5.500 6 18 5M9.500 18Q10 10 18 9.500" /><circle cx="16" cy="16" r="1.800" fill="#fff" stroke="none" /><path d="M13 18Q13 14 17 13" /></svg>
            </TaskSlot>
            <TaskSlot $w={34}>
              <svg width="20" height="18" viewBox="0 0 20 18" fill="none" stroke="#fff" strokeWidth="1.300"><path d="M.7 5.500H4L8.500 1V17L4 12.500H.7ZM12.500 6 19.500 12.500M19.500 6 12.500 12.500" /></svg>
            </TaskSlot>
            <Clock>19:10<br />27.03.2020</Clock>
            <TaskSlot $w={56}>
              <svg width="24" height="24" viewBox="0 0 24 24" fill="none" stroke="#fff" strokeWidth="1.500"><path d="M.7 1H23.300V19H16L11 23.500 7 19H.7Z" /></svg>
            </TaskSlot>
            <ShowDesktop />
          </Tray>
        </TaskBar>
      </Screen>
    </>
  );
}
